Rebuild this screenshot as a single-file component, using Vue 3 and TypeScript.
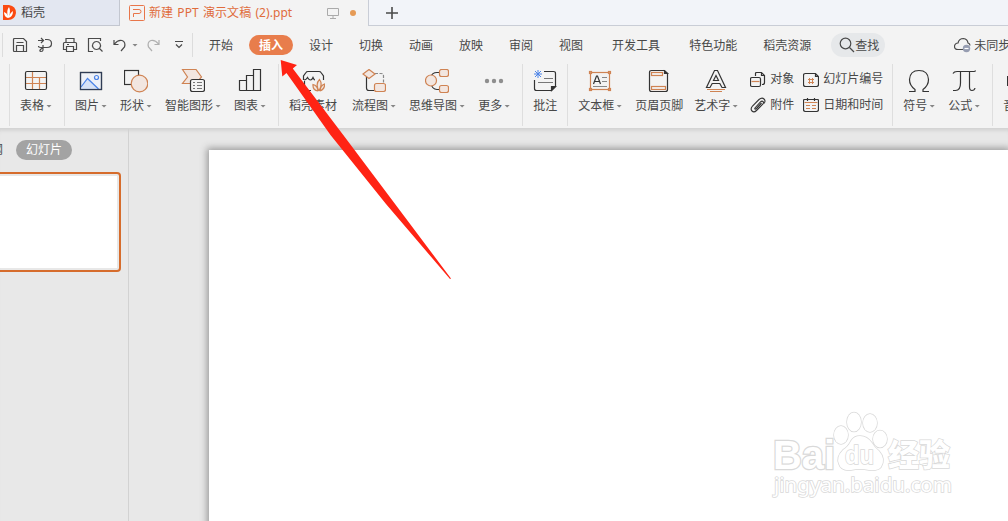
<script setup lang="ts">
interface Tool { label: string; icon: string; caret?: boolean; shift?: 'wide' | 'near' }
interface Group { id: string; tools: Tool[]; pad?: 'tight' | 'tighter'; pairs?: Tool[] }

const art: Record<string, string> = {
  table: '<path class="o" d="M2 8.5H22M2 14.5H22M8.5 3V20M15.5 9V20"/><rect x="1.5" y="2.5" width="21" height="18" rx="1.5"/>',
  picture: '<rect x="1.5" y="3.5" width="21" height="17" fill="#eef1f8"/><path d="M2 18L8.5 9.5L19.5 20H2Z" stroke="none" fill="#d7e2f6"/><path d="M2 18L8.5 9.5L19.500 20" stroke="#4c84e8"/><circle cx="17.5" cy="8.5" r="2" stroke="#4c84e8"/><rect x="1.5" y="3.5" width="21" height="17" stroke="#2f3c55"/>',
  shape: '<rect x=".5" y="1.5" width="14" height="14"/><circle class="f" cx="15.5" cy="14.5" r="8.3"/>',
  smart: '<path class="f" d="M1.5 .5H15L20.5 8L15 14.5H1.5L6.5 8Z"/><rect x="9.5" y="10.5" width="14" height="12" rx="2" fill="#f3f3f3"/><path d="M12 13.5H14M16 13.5H21M12 16.5H14M16 16.5H21M12 19.5H14M16 19.5H21" stroke="#777"/>',
  chart: '<path d="M1.5 21.5V11.5H8.5V21.5M8.5 21.5V6.5H15.5V21.5M15.5 21.5V.5H22.5V21.5H1.5"/>',
  material: '<path d="M3.500 12V20Q3.500 21.500 5.500 21.500H10M2.500 11V7L5 3.500Q5.500 2.500 7 2.500H18Q19.500 2.500 20 3.500L22.500 7V11M3 11Q5 11 6.500 8.500Q8 11 9.500 11Q11 11 12 8.500Q13 11 14 11"/><path class="f" d="M18 22Q14 15 18.500 10.500Q22 15 18 22M17 22Q11.500 21 12 15.500Q16.500 16.500 17 22M19 22Q24 20 23.500 15Q19.500 16.500 19 22"/>',
  flow: '<path d="M4.5 8V19Q4.5 21.500 7 21.500H12"/><path d="M13 4.500H19Q21.500 4.500 21.500 7V14" stroke="#888" stroke-dasharray="3 1.500"/><path class="f" d="M7 .5L13 5L7 9.500L1 5Z"/><rect class="f" x="12.500" y="14.500" width="11" height="8" rx="2"/>',
  mind: '<path d="M6 8Q7 3.500 12 3.500H14M6 14Q7 20.500 12 20.500H14"/><circle class="f" cx="6" cy="11.500" r="5.500"/><rect class="f" x="14.500" y=".5" width="9" height="7" rx="2"/><rect class="f" x="14.500" y="16.500" width="9" height="7" rx="2"/>',
  more: '<g fill="#8e8e8e" stroke="none"><circle cx="5" cy="12" r="2.200"/><circle cx="12" cy="12" r="2.200"/><circle cx="19" cy="12" r="2.200"/></g>',
  comment: '<path d="M1.500 11V19.500Q1.500 21.500 3.500 21.500H18.500L22.500 17.500V4.500Q22.500 2.500 20.500 2.500H11"/><path d="M18.500 21.500V17.500H22.500Z" fill="#333"/><path d="M11 9.500H20M5 13.500H20" stroke="#777"/><path d="M5 1V9M1 5H9M2 2L8 8M8 2L2 8" stroke="#4c84e8" stroke-width="1"/>',
  textbox: '<rect class="o" x="2.500" y="3.500" width="19" height="17"/><path d="M5.500 15L8.500 7H9.500L12.500 15M6.800 12.500H11.200"/><path d="M14 8.500H19M14 12.500H19M5 17.500H19" stroke="#888"/><g class="o" fill="#fff"><rect x="1.500" y="2.500" width="2" height="2"/><rect x="20.500" y="2.500" width="2" height="2"/><rect x="1.500" y="19.500" width="2" height="2"/><rect x="20.500" y="19.500" width="2" height="2"/></g>',
  header: '<path d="M4.500 1.500H17.500L20.500 4.500V20.500Q20.500 22.500 18.500 22.500H4.500Q2.500 22.500 2.500 20.500V3.500Q2.500 1.500 4.500 1.500"/><path d="M17.500 2V4.500H20.500Z" fill="#333"/><rect class="o" x="4.500" y="3.500" width="11" height="3"/><rect class="o" x="4.500" y="17.500" width="14" height="3"/>',
  wordart: '<path d="M10.500 1.500H13.500L21.500 18.500H18L15.800 14.500H8.200L6 18.500H2.500ZM12 6.500L9.500 11.500H14.500Z"/><path class="o" d="M3 20.500H21M6 22.500H18"/>',
  omega: '<path d="M2 22.500H8V20.500Q2.500 16.500 2.500 10.500Q3 1.500 12 1.500Q21 1.500 21.500 10.500Q21.500 16.500 16 20.500V22.500H22"/>',
  pi: '<path d="M1 4.500Q2 2.500 5 2.500H22Q23.500 2.500 23.500 1.500M8.500 3V14Q8.500 21.500 3.500 21.500H1M17.500 3V18Q17.500 21.500 20 21.500Q22.500 21.500 23 19"/>',
  media: '<path d="M.5 7.500H8V16.500H.5Z" fill="#222"/>',
  object: '<path d="M5.500 5V2.500Q5.500 1.500 6.500 1.500H11.500L14.500 4.500V11.500Q14.500 13.500 12.500 13.500H12M11.500 2V4.500H14"/><rect x=".5" y="6.500" width="10" height="9" rx="1.500"/><path class="o" d="M1.500 10.500H9.500"/>',
  clip: '<path d="M4.500 11.500L10.500 4.800Q12 3.500 13 4.500Q14 5.500 13 6.800L6.500 13.500Q4 16 2 14Q0 12 2.500 9L9 2.500Q12 0 14 2Q16 4 14 6.500" stroke-width="1.100"/><path d="M4.500 11.500Q5.500 12.500 6.500 11.500L11.500 6"/>',
  number: '<path d="M2.500 2.500H12.500L15.500 5.500V13.500Q15.500 15.500 13.500 15.500H2.500Q.5 15.500 .5 13.500V4.500Q.5 2.500 2.500 2.500M12.500 2.500V5.500H15.500"/><path class="o" stroke-width="1" d="M6.500 7V13M9.500 7V13M5 8.500H11M5 11.500H11"/>',
  date: '<path d="M.5 3.500V12.500Q.5 14.500 2.500 14.500H13.500Q15.500 14.500 15.500 12.500V3.500Q15.500 2.500 14.500 2.500H1.500Q.5 2.500 .5 3.500M4.500 1V4M11.500 1V4"/><path class="o" d="M1.500 5.500H14.500M3 8.500H7M9 8.500H13M3 11.500H7M9 11.500H13"/>',
}

const quick: { id: string; d: string }[] = [
  { id: 'save', d: 'M2.500 1.500H11.500L14.500 4.500V14.500H2.500Q1.500 14.500 1.500 13.500V2.500Q1.500 1.500 2.500 1.500M4.500 5.500H11.500M4.500 14.500V8.500H11.500V14.500' },
  { id: 'export', d: 'M1 3.500H6M4 1L6.500 3.500L4 6M8 2.500H10Q14.500 2.500 14.500 6.500Q14.500 10.500 10 10.500H3.500Q1.500 10.500 1.500 9M6 8V13Q6 14.500 4 14.500Q2 14 3.500 12.500L6 10.500' },
  { id: 'print', d: 'M4 5V1.500H12V5M4 12.500H1.500V6.500Q1.500 5.500 2.500 5.500H13.500Q14.500 5.500 14.500 6.500V12.500H12M4.500 9.500H11.500V14.500H4.500ZM5 7.500H7' },
  { id: 'preview', d: 'M6 14.500H1.500V1.500H13.500V4M9.500 4.500A4 4 0 1 0 9.510 4.500M12.500 11.500L15.500 14.500' },
  { id: 'undo', d: 'M2 3V7.500H6.500M2.500 7Q6 2.500 10 3.500Q14 5 12.500 10L9 14' },
]

const menusLeft = ['设计', '切换', '动画', '放映', '审阅', '视图']
const menusRight = ['开发工具', '特色功能', '稻壳资源']

const groups: Group[] = [
  { id: 'table', tools: [{ label: '表格', icon: 'table', caret: true }] },
  { id: 'media', tools: [
    { label: '图片', icon: 'picture', caret: true }, { label: '形状', icon: 'shape', caret: true },
    { label: '智能图形', icon: 'smart', caret: true }, { label: '图表', icon: 'chart', caret: true } ] },
  { id: 'docer', tools: [
    { label: '稻壳素材', icon: 'material', shift: 'wide' }, { label: '流程图', icon: 'flow', caret: true },
    { label: '思维导图', icon: 'mind', caret: true }, { label: '更多', icon: 'more', caret: true } ] },
  { id: 'comment', pad: 'tight', tools: [{ label: '批注', icon: 'comment' }] },
  { id: 'text', pad: 'tighter', tools: [
    { label: '文本框', icon: 'textbox', caret: true }, { label: '页眉页脚', icon: 'header', shift: 'near' }, { label: '艺术字', icon: 'wordart', caret: true } ],
    pairs: [
      { label: '对象', icon: 'object' }, { label: '幻灯片编号', icon: 'number' },
      { label: '附件', icon: 'clip' }, { label: '日期和时间', icon: 'date' } ] },
  { id: 'symbol', tools: [{ label: '符号', icon: 'omega', caret: true }, { label: '公式', icon: 'pi', caret: true }] },
  { id: 'audio', tools: [{ label: '音频', icon: 'media', caret: true }] },
]
</script>

<template>
  <div class="app">
    <header class="tabs">
      <div class="tab home">
        <svg width="17" height="18" viewBox="0 0 17 18"><path d="M3 1H9Q16 2 16 9Q15 16 8 16H3Z" fill="#fb4a12"/><path d="M8 14Q4 13 4 8Q7 9 8 12Q6 7 9 3Q11 7 9 12Q10 9 13 7Q13 13 8 14" fill="#fff"/></svg>
        <span>稻壳</span>
      </div>
      <div class="tab active">
        <svg width="16" height="16" viewBox="0 0 16 16" fill="none" stroke="#e8764a"><rect x=".5" y=".5" width="15" height="15" rx="1"/><path d="M4 4.500H10Q12 4.500 12 6.500Q12 8.500 10 8.500H4.500V12"/></svg>
        <span class="filename">新建 PPT 演示文稿 (2).ppt</span>
        <svg class="monitor" width="12" height="12" viewBox="0 0 12 12" fill="none" stroke="#aaa"><path d="M.5 1.500H11.500V8.500H.5ZM6 8.500V11M3 11.500H9"/></svg>
        <i class="dot"></i>
      </div>
      <div class="rest">
        <svg width="12" height="12" viewBox="0 0 12 12" stroke="#4a4a4a" stroke-width="1.600"><path d="M6 0V12M0 6H12"/></svg>
      </div>
    </header>

    <nav class="menu">
      <div class="quick">
        <svg v-for="q in quick" :key="q.id" class="line" width="16" height="16" viewBox="0 0 16 16"><path :d="q.d"/></svg>
        <i class="caret"></i>
        <svg class="line redo" width="16" height="16" viewBox="0 0 16 16"><path d="M13 3V7.500H8.500M12.500 7Q9 2.500 5 3.500Q1 5 2.500 10L6 14"/></svg>
        <svg class="line drop" width="10" height="10" viewBox="0 0 10 10"><path d="M1 1.500H9M2 4.500L5 7.500L8 4.500"/></svg>
      </div>
      <span class="first">开始</span>
      <span class="current">插入</span>
      <span v-for="m in menusLeft" :key="m" class="short">{{ m }}</span>
      <span v-for="m in menusRight" :key="m" class="long">{{ m }}</span>
      <div class="search">
        <svg class="line" width="16" height="16" viewBox="0 0 16 16"><circle cx="6.500" cy="6.500" r="5.300"/><path d="M10.500 10.500L15 15"/></svg>
        <span>查找</span>
      </div>
      <div class="sync">
        <svg class="line" width="18" height="16" viewBox="0 0 18 16"><path d="M10 12.500H4Q.5 12.500 .5 9.500Q.5 6.500 4 6Q5 1.500 9.500 1.500Q13.500 2 14 6Q16 6.500 16 8.500"/><circle cx="12.500" cy="11.500" r="3.700" fill="#969db1" stroke="none"/><path d="M10.500 11.500H14.500" stroke="#fff"/></svg>
        <span>未同步</span>
      </div>
    </nav>

    <section class="ribbon">
      <div v-for="g in groups" :key="g.id" class="group" :class="g.pad">
        <div v-for="t in g.tools" :key="t.label" class="tool" :class="t.shift">
          <svg class="icon" width="24" height="24" viewBox="0 0 24 24" v-html="art[t.icon]"></svg>
          <div class="label">{{ t.label }}<i v-if="t.caret" class="caret"></i></div>
        </div>
        <div v-if="g.pairs" class="pairs">
          <div v-for="p in g.pairs" :key="p.label" class="pair">
            <svg class="icon" width="16" height="17" viewBox="0 0 16 17" v-html="art[p.icon]"></svg>
            <span>{{ p.label }}</span>
          </div>
        </div>
      </div>
    </section>

    <main class="work">
      <aside class="side">
        <div class="switch"><span class="outline">大纲</span><span class="slides">幻灯片</span></div>
        <div class="thumb"><div class="page"></div></div>
      </aside>
      <div class="canvas"><div class="slide"></div></div>
    </main>

    <svg class="watermark" width="190" height="96" viewBox="0 0 190 96">
      <g class="wm">
        <text class="latin bold" x="3" y="64" font-size="41" textLength="62" lengthAdjust="spacingAndGlyphs">Bai</text>
        <ellipse cx="71" cy="30" rx="7" ry="9"/><ellipse cx="84" cy="17" rx="7" ry="9.500"/><ellipse cx="100" cy="18" rx="7" ry="9"/><ellipse cx="110" cy="34" rx="7" ry="8.500"/>
        <path d="M90 31Q97 31 102 38Q104 42 109 46Q116 54 111 62Q108 66 99 65Q90 63 81 65Q71 66 69 59Q66 52 73 45Q78 42 81 36Q84 31 90 31Z"/>
        <text class="latin" x="75" y="59" font-size="25" textLength="29" lengthAdjust="spacingAndGlyphs">du</text>
        <text class="cjk" x="118" y="61" font-size="31" textLength="62">经验</text>
        <text class="light" x="4" y="87" font-size="19" textLength="178" lengthAdjust="spacingAndGlyphs">jingyan.baidu.com</text>
      </g>
    </svg>
    <svg class="arrow" width="180" height="230" viewBox="275 55 180 230"><path d="M280.700 60L297 65L292.800 68.500L342.500 134L451 278.500L450 279L386 204L330.500 135L286.500 73L282.300 76.500Z" fill="#ff2314"/></svg>
  </div>
</template>

<style>
html, body { overflow: hidden; }
</style>

<style scoped>
.app { position: relative; width: 1008px; height: 521px; overflow: hidden; display: flex; flex-direction: column; background: #e8e8e8; color: #484848; font: 12px/16px "Noto Sans", "Noto Sans CJK SC", sans-serif; white-space: nowrap; }
.app svg { display: block; flex: none; }
.tabs { display: flex; height: 26px; background: #f3f3f3; flex: none; }
.tab { display: flex; align-items: center; box-sizing: border-box; }
.home { width: 120px; background: #e3e7f1; border-right: 1px solid #c3c7d0; border-bottom: 1px solid #c3c7d0; gap: 4px; }
.active { width: 248px; padding-left: 9px; color: #e06c3c; }
.filename { width: 144px; margin-left: 4px; word-spacing: 1px; letter-spacing: .07px; }
.monitor { margin-left: 34px; }
.dot { width: 6px; height: 6px; margin-left: 11px; border-radius: 50%; background: #e59a55; }
.rest { flex: 1; background: #f2f4f9; border-left: 1px solid #c9cdd6; border-bottom: 1px solid #c9cdd6; display: flex; align-items: center; padding-left: 17px; }
.menu { display: flex; align-items: center; height: 38px; flex: none; background: #f3f3f3; }
.menu > * { flex: none; }
.menu span { position: relative; top: .5px; }
.menu .current { top: 0; }
.quick { display: flex; align-items: center; width: 191px; height: 24px; margin-left: 2px; box-sizing: border-box; border-left: 1px solid #dcdcdc; border-right: 1px solid #dcdcdc; padding-left: 9px; gap: 9px; }
.quick .caret { margin: 0 -1px 0 -5px; }
.redo { opacity: .4; }
.drop { margin-left: 3px; }
.line { fill: none; stroke: #4a4a4a; stroke-width: 1.200; }
.first { margin-left: 16px; }
.current { width: 44px; height: 20px; line-height: 21px; margin: 0 16px; border-radius: 10px; background: #e87d4c; color: #fff; text-align: center; font-weight: bold; }
.short { margin-right: 26px; }
.long { margin-right: 26px; }
.long:nth-of-type(9), .long:nth-of-type(10) { margin-left: 3px; }
.search { display: flex; align-items: center; width: 54px; height: 24px; margin-left: -6px; padding-left: 8px; box-sizing: border-box; border-radius: 12px; background: #e6e8ea; }
.sync { display: flex; align-items: center; margin-left: 69px; gap: 2px; }
.ribbon { display: flex; height: 65px; padding-left: 9px; box-sizing: border-box; background: #f3f3f3; border-bottom: 1px solid #d4d4d4; flex: none; }
.group { display: flex; flex: none; height: 62px; border-left: 1px solid #dedede; padding: 0 12px 0 10px; gap: 13px; }
.group.tight { padding-right: 10px; }
.group.tighter { padding-right: 9px; }
.tool { display: flex; flex-direction: column; align-items: center; padding-top: 5px; gap: 5px; }
.wide { margin-right: 2px; }
.near { margin-right: -2px; }
.label { display: flex; align-items: center; }
.caret { width: 6px; height: 3px; background: #858585; clip-path: polygon(0 0, 100% 0, 50% 100%); margin-left: 2px; }
.icon { fill: none; stroke: #333; stroke-width: 1.200; }
.icon :deep(.o) { stroke: #cf8353; }
.icon :deep(.f) { stroke: #cf8353; fill: #f2e6e0; }
.pairs { display: grid; grid-template-columns: 53px 80px; grid-auto-rows: 26px; align-items: center; padding-top: 2px; margin-left: -1px; }
.pair { display: flex; align-items: center; gap: 4px; }
.work { display: flex; flex: 1; min-height: 0; box-shadow: inset 0 4px 4px -3px #ccc; }
.side { width: 129px; box-sizing: border-box; border-right: 1px solid #d2d2d2; padding-top: 11px; }
.switch { display: flex; align-items: center; margin-left: -21px; gap: 13px; height: 20px; }
.slides { width: 56px; height: 20px; line-height: 20px; border-radius: 10px; background: #a3a3a3; color: #fff; text-align: center; }
.thumb { width: 121px; height: 100px; margin-top: 12px; box-sizing: border-box; border: 2px solid #d66c2c; border-left: 0; border-radius: 0 4px 4px 0; padding: 2px 2px 2px 0; }
.page { height: 100%; background: #fff; }
.canvas { flex: 1; padding: 21px 0 0 80px; overflow: hidden; }
.slide { height: 400px; background: #fff; box-shadow: 0 0 7px 2px #999; }
.watermark { position: absolute; left: 770px; top: 405px; }
.wm { fill: #fff; stroke: #d9d9d9; stroke-width: 1.500; paint-order: stroke; }
.latin { font-family: "Liberation Sans", sans-serif; font-weight: bold; }
.bold { stroke-width: 2.500; }
.light { font-family: "Noto Sans", sans-serif; }
.cjk { font-family: "Noto Sans CJK SC", sans-serif; font-weight: 900; }
.arrow { position: absolute; left: 275px; top: 55px; }
</style>
